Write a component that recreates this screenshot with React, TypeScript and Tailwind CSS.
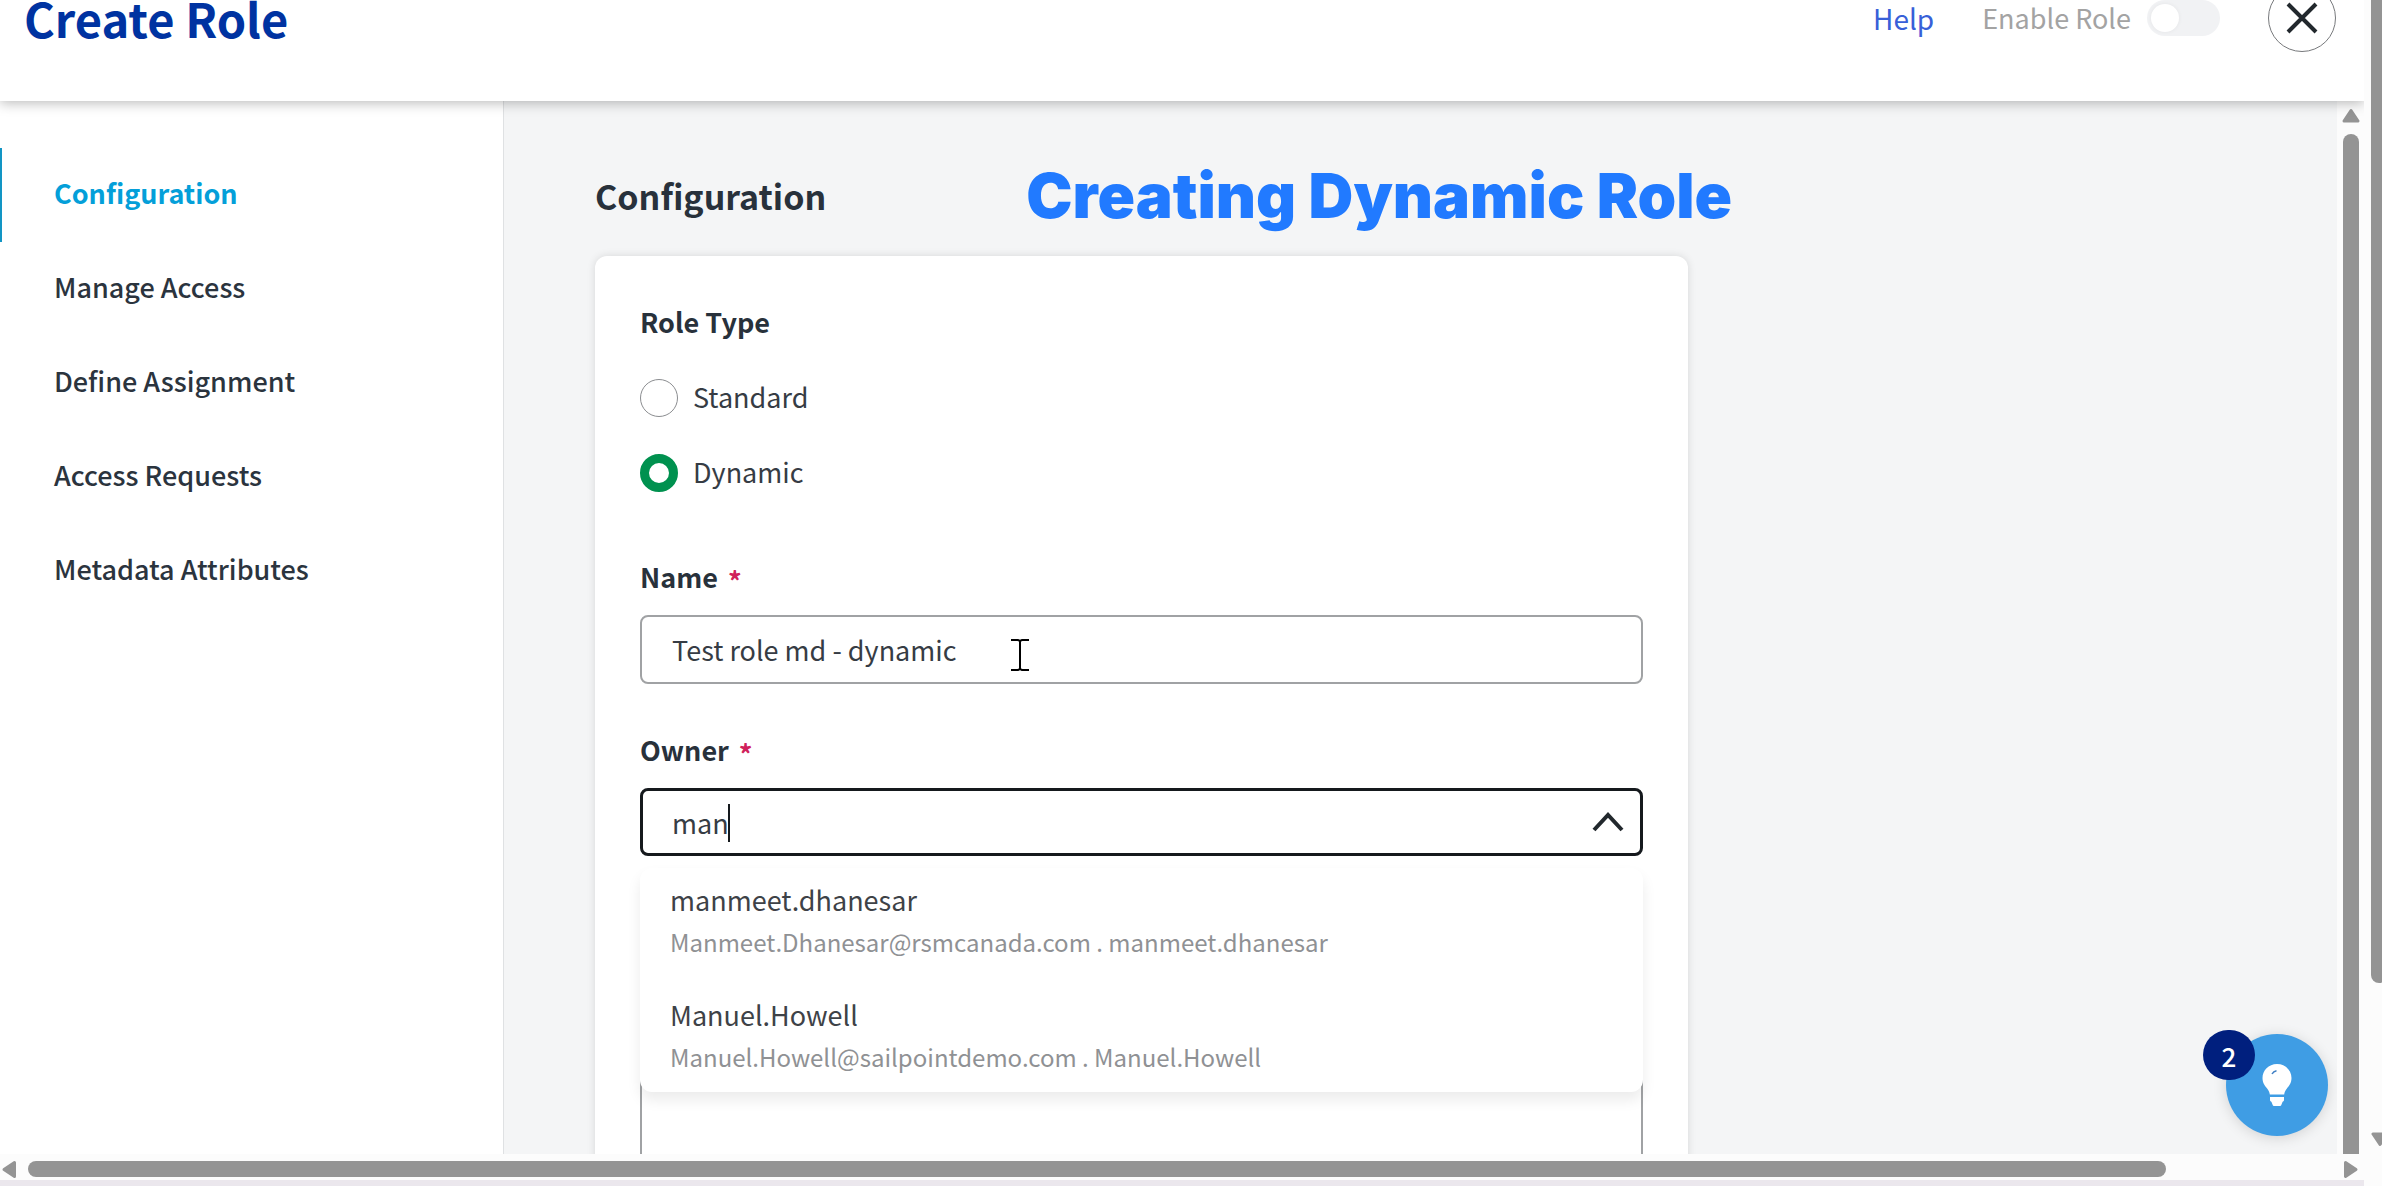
import { useState } from 'react';

const sections = [
  'Configuration',
  'Manage Access',
  'Define Assignment',
  'Access Requests',
  'Metadata Attributes',
];

const owners = [
  { name: 'manmeet.dhanesar', detail: 'Manmeet.Dhanesar@rsmcanada.com . manmeet.dhanesar' },
  { name: 'Manuel.Howell', detail: 'Manuel.Howell@sailpointdemo.com . Manuel.Howell' },
];

function Header() {
  return (
    <header className="relative z-10 -mt-[65px] flex h-[166px] shrink-0 items-center bg-white pr-7 pl-6 shadow-[0_2px_12px_rgba(0,0,0,0.28)]">
      <h1 className="text-[47px] leading-[48px] font-bold text-[#0033a1]">Create Role</h1>
      <div className="ml-auto flex items-center">
        <a href="#help" className="text-[28px] leading-9 text-[#3860d8]">
          Help
        </a>
        <label className="ml-12 flex items-center gap-4 text-[27px] leading-9 text-[#a3a3a3]">
          Enable Role
          <input type="checkbox" role="switch" className="peer sr-only" />
          <span className="flex h-9 w-[73px] items-center rounded-full bg-[#f1f2f4] px-1">
            <span className="size-7 rounded-full bg-white shadow-[0_0_4px_rgba(0,0,0,0.06)]" />
          </span>
        </label>
        <button
          type="button"
          aria-label="Close"
          className="ml-12 flex size-[68px] items-center justify-center rounded-full border border-[#77797c] text-[#22282d]"
        >
          <svg viewBox="0 0 32 32" className="size-8" fill="none" stroke="currentColor" strokeWidth="4">
            <path d="M2 2 30 30M30 2 2 30" />
          </svg>
        </button>
      </div>
    </header>
  );
}

function Sidebar() {
  return (
    <nav className="w-[504px] shrink-0 border-r border-[#dfe1e3] bg-white pt-[47px]">
      <ul>
        {sections.map((name, i) => (
          <li key={name}>
            <a
              href="#section"
              aria-current={i === 0 ? 'page' : undefined}
              className={
                i === 0
                  ? 'flex h-[94px] items-center border-l-2 border-[#1295c4] pb-1 pl-[52px] text-[27px] font-bold text-[#049fd9]'
                  : 'flex h-[94px] items-center border-l-2 border-transparent pb-1 pl-[52px] text-[27px] font-medium text-[#2b343e]'
              }
            >
              {name}
            </a>
          </li>
        ))}
      </ul>
    </nav>
  );
}

function Radio({ label, checked, onChange }: { label: string; checked: boolean; onChange: () => void }) {
  return (
    <label className="flex h-[75px] items-center gap-[15px] text-[27px] text-[#363c44]">
      <input
        type="radio"
        name="role-type"
        checked={checked}
        onChange={onChange}
        className="size-[38px] shrink-0 appearance-none rounded-full border border-[#8b8d90] bg-white checked:border-[9px] checked:border-[#00914f]"
      />
      {label}
    </label>
  );
}

function FieldLabel({ htmlFor, children }: { htmlFor: string; children: string }) {
  return (
    <label htmlFor={htmlFor} className="flex h-9 items-center gap-2.5 text-[27px] leading-9 font-bold text-[#28313b]">
      {children}
      <span className="pt-2 text-[#d0215b]">*</span>
    </label>
  );
}

function RoleForm() {
  const [type, setType] = useState('Dynamic');
  const [name, setName] = useState('Test role md - dynamic');
  const [owner, setOwner] = useState('man');
  return (
    <form className="w-full max-w-[1093px] rounded-xl bg-white px-[45px] pt-12 pb-16 shadow-[0_0_8px_rgba(0,0,0,0.12)]">
      <fieldset>
        <legend className="text-[27px] leading-9 font-bold text-[#28313b]">Role Type</legend>
        <div className="pt-5">
          {['Standard', 'Dynamic'].map((t) => (
            <Radio key={t} label={t} checked={type === t} onChange={() => setType(t)} />
          ))}
        </div>
      </fieldset>

      <div className="relative mt-[49px]">
        <FieldLabel htmlFor="name">Name</FieldLabel>
        <input
          id="name"
          value={name}
          onChange={(e) => setName(e.target.value)}
          className="mt-5 block h-[69px] w-full rounded-lg border-2 border-[#a0a2a4] px-[30px] text-[27px] text-[#363c44]"
        />
        <svg viewBox="0 0 18 32" className="absolute top-20 left-[371px] h-8 w-[18px]" fill="none" stroke="#000" strokeWidth="2">
          <path d="M0 1h7l2 1 2-1h7M9 2v28M0 31h7l2-1 2 1h7" />
        </svg>
      </div>

      <div className="relative mt-12">
        <FieldLabel htmlFor="owner">Owner</FieldLabel>
        <div className="relative mt-5 flex h-[68px] items-center rounded-lg border-[3px] border-[#15191d] pr-4 pl-[29px]">
          <div className="relative grow">
            <input
              id="owner"
              role="combobox"
              aria-expanded="true"
              aria-controls="owner-options"
              value={owner}
              onChange={(e) => setOwner(e.target.value)}
              className="block h-[60px] w-full text-[27px] text-[#363c44] outline-none"
            />
            <span className="absolute top-3 left-14 h-[38px] w-0.5 bg-[#15191d]" />
          </div>
          <button type="button" aria-label="Toggle owners" className="text-[#22282d]">
            <svg viewBox="0 0 32 20" className="h-5 w-8" fill="none" stroke="currentColor" strokeWidth="4">
              <path d="M2 18 16 3l14 15" />
            </svg>
          </button>
        </div>
        <ul
          id="owner-options"
          role="listbox"
          aria-label="Owners"
          className="absolute inset-x-0 top-full z-10 mt-3 rounded-xl bg-white pb-[7px] shadow-[0_8px_14px_rgba(0,0,0,0.08)]"
        >
          {owners.map((o) => (
            <li key={o.name} role="option" aria-selected="false" className="h-[115px] px-[30px] pt-3 last:h-[102px]">
              <p className="text-[27px] leading-10 text-[#3e4247]">{o.name}</p>
              <p className="pt-0.5 text-[24px] leading-10 text-[#8f9194]">{o.detail}</p>
            </li>
          ))}
        </ul>
      </div>

      <textarea
        aria-label="Description"
        className="mt-[104px] block h-[240px] w-full resize-none rounded-lg border-2 border-[#a0a2a4] px-[30px] py-4 text-[27px]"
      />
    </form>
  );
}

function HelpBubble() {
  return (
    <div className="absolute right-[9px] bottom-[18px] z-20">
      <button
        type="button"
        aria-label="Tips"
        className="flex size-[102px] items-center justify-center rounded-full bg-[#3f9de4] shadow-[0_2px_14px_rgba(0,0,0,0.14)]"
      >
        <svg viewBox="0 0 30 42" className="h-[42px] w-[30px]">
          <path
            d="M15 0C6.500 0 .5 6.500.5 14c0 5 2.500 8 5 11 1.500 2 2 3.500 2.300 5.500h14.400c.3-2 .8-3.500 2.300-5.500 2.500-3 5-6 5-11C29.500 6.500 23.500 0 15 0Z"
            fill="#fff"
          />
          <path d="M8 33h14v3c0 1-1 1.500-1.500 2l-1 2.500c-.3 1-1 1.500-2 1.500h-5c-1 0-1.700-.5-2-1.500L9.500 38C9 37.500 8 37 8 36Z" fill="#fff" />
          <path d="M10 10c1-1.800 2.500-2.800 4.500-3.200" fill="none" stroke="#3f7fc4" strokeWidth="1.500" />
        </svg>
      </button>
      <span className="absolute -top-1 -left-[23px] flex h-[50px] w-[52px] items-center justify-center rounded-full bg-[#001f7e] text-[26px] font-medium text-white">
        2
      </span>
    </div>
  );
}

function Arrow({ className }: { className: string }) {
  return (
    <svg viewBox="0 0 18 15" className={className} fill="#949494" stroke="#949494" strokeWidth="3" strokeLinejoin="round">
      <path d="M9 2.500 16 13H2Z" />
    </svg>
  );
}

export default function App() {
  return (
    <div className="flex h-screen overflow-hidden bg-[#fcfcfc] font-['Noto_Sans_CJK_SC',sans-serif]">
      <div className="flex min-w-0 grow flex-col overflow-hidden">
        <Header />
        <div className="flex min-h-0 grow">
          <Sidebar />
          <main className="relative min-w-0 grow overflow-hidden bg-[#f4f5f6]">
            <div className="pt-[71px] pr-16 pl-[91px]">
              <div className="mb-9 flex h-12 items-center">
                <h2 className="text-[34px] leading-[48px] font-bold text-[#28313b]">Configuration</h2>
                <p className="ml-[200px] font-['Inter',sans-serif] text-[62px] leading-[48px] font-black whitespace-nowrap text-[#217aff]">
                  Creating Dynamic Role
                </p>
              </div>
              <RoleForm />
            </div>
            <HelpBubble />
          </main>
          <div className="flex w-[27px] shrink-0 flex-col items-center bg-[#fcfcfc] pt-[7px]">
            <Arrow className="h-[15px] w-[18px] shrink-0" />
            <div className="mt-[11px] w-4 grow rounded-t-full bg-[#949494]" />
          </div>
        </div>
        <div className="flex h-[26px] shrink-0 items-center bg-[#fcfcfc] pt-1">
          <Arrow className="h-[15px] w-[18px] shrink-0 -rotate-90" />
          <div className="ml-2.5 h-4 grow rounded-full bg-[#949494]" />
          <Arrow className="mr-1 ml-[176px] h-[15px] w-[18px] shrink-0 rotate-90" />
        </div>
        <div className="h-1.5 shrink-0 bg-[#ebe7ed]" />
      </div>
      <div className="flex w-[18px] shrink-0 flex-col overflow-hidden pl-[7px]">
        <div className="h-[983px] w-4 rounded-b-full bg-[#949494]" />
        <Arrow className="mt-auto mb-[39px] h-[15px] w-[18px] shrink-0 rotate-180" />
      </div>
    </div>
  );
}
